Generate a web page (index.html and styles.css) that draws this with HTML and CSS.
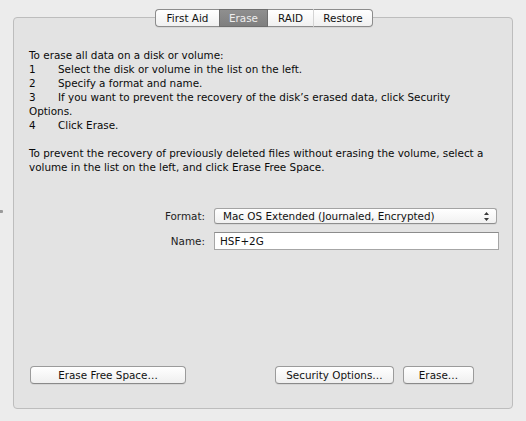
FILE: index.html
```html
<!DOCTYPE html>
<html>
<head>
<meta charset="utf-8">
<link rel="stylesheet" href="styles.css">
</head>
<body>
<div class="window">
  <span class="grip"></span>
  <div class="tabs">
    <span class="tab t1">First Aid</span>
    <span class="tab t2 selected">Erase</span>
    <span class="tab t3">RAID</span>
    <span class="tab t4">Restore</span>
  </div>
  <div class="panel">
    <div class="instructions">
      <p class="steps">To erase all data on a disk or volume:<br>1&#9;Select the disk or volume in the list on the left.<br>2&#9;Specify a format and name.<br>3&#9;If you want to prevent the recovery of the disk’s erased data, click Security Options.<br>4&#9;Click Erase.</p>
      <p>To prevent the recovery of previously deleted files without erasing the volume, select a volume in the list on the left, and click Erase Free Space.</p>
    </div>
    <div class="form">
      <span class="label">Format:</span>
      <div class="popup"><span>Mac OS Extended (Journaled, Encrypted)</span>
        <svg class="arrows" width="5" height="9" viewBox="0 0 5 9"><path d="M2.5 0 L5 3 L0 3 Z M0 6 L5 6 L2.5 9 Z" fill="#3a3a3a"/></svg>
      </div>
      <span class="label">Name:</span>
      <div class="field">HSF+2G</div>
    </div>
    <div class="actions">
      <span class="btn btn-free">Erase Free Space…</span>
      <span class="btn btn-sec">Security Options…</span>
      <span class="btn btn-erase">Erase…</span>
    </div>
  </div>
</div>
</body>
</html>
```
FILE: styles.css
```css
html, body {
  margin: 0;
  padding: 0;
}
body {
  background: #ececec;
  font-family: "Lucida Grande", "DejaVu Sans", sans-serif;
  font-size: 10.4px;
  color: #0a0a0a;
}
.window {
  position: relative;
  height: 421px;
  box-sizing: border-box;
  padding: 9px 13px 12px 13px;
  display: flex;
  flex-direction: column;
}
.grip {
  position: absolute;
  left: 0;
  top: 210px;
  width: 3px;
  height: 3px;
  background: #9a9a9a;
  border-radius: 0 1px 1px 0;
}
.tabs {
  display: flex;
  justify-content: center;
  position: relative;
  z-index: 1;
  height: 18px;
  margin-bottom: -10px;
  padding-left: 2px;
}
.tab {
  box-sizing: border-box;
  height: 18px;
  display: flex;
  align-items: center;
  justify-content: center;
  border-top: 1px solid #8c8c8c;
  border-bottom: 1px solid #8c8c8c;
  background: linear-gradient(#ffffff, #f0f0f0);
  color: #111;
  box-shadow: 0 1px 0 rgba(0,0,0,0.06);
}
.t1 {
  width: 64px;
  border-left: 1px solid #8c8c8c;
  border-radius: 4px 0 0 4px;
}
.t2 {
  width: 49px;
}
.t3 {
  width: 45px;
}
.t4 {
  width: 60px;
  border-right: 1px solid #8c8c8c;
  border-left: 1px solid #d4d4d4;
  border-radius: 0 4px 4px 0;
}
.tab.selected {
  background: linear-gradient(#8f8f8f, #7f7f7f);
  color: #eeeeee;
  border-color: #6e6e6e;
  border-left: 1px solid #6e6e6e;
  border-right: 1px solid #6e6e6e;
}
.panel {
  flex: 1;
  border: 1px solid #bdbdbd;
  border-radius: 4px;
  background: #e3e3e3;
  display: flex;
  flex-direction: column;
  padding: 30px 20px 24px 15px;
}
.instructions p {
  margin: 0 0 14px 0;
  line-height: 14px;
}
.instructions .steps {
  white-space: pre-wrap;
  tab-size: 29px;
}
.form {
  display: grid;
  grid-template-columns: 176px 285px;
  column-gap: 9px;
  row-gap: 8px;
  align-items: center;
  margin-top: 20px;
}
.label {
  text-align: right;
  color: #222;
}
.popup {
  box-sizing: border-box;
  width: 283px;
  height: 16px;
  border: 1px solid #a3a3a3;
  border-bottom-color: #8e8e8e;
  border-radius: 3px;
  background: linear-gradient(#ffffff, #f1f1f1);
  display: flex;
  align-items: center;
  justify-content: space-between;
  padding: 0 7px 0 8px;
  color: #111;
  box-shadow: 0 1px 0 rgba(0,0,0,0.05);
}
.arrows {
  display: block;
}
.field {
  box-sizing: border-box;
  height: 18px;
  border: 1px solid #a6a6a6;
  border-top-color: #8c8c8c;
  background: #ffffff;
  display: flex;
  align-items: center;
  padding-left: 5px;
  color: #111;
}
.actions {
  margin-top: auto;
  display: flex;
  align-items: center;
  padding-left: 1px;
  margin-right: 18px;
}
.btn {
  box-sizing: border-box;
  height: 18px;
  display: flex;
  align-items: center;
  justify-content: center;
  border: 1px solid #9b9b9b;
  border-bottom-color: #8a8a8a;
  border-radius: 4px;
  background: linear-gradient(#ffffff, #efefef);
  color: #111;
  box-shadow: 0 1px 0 rgba(0,0,0,0.06);
}
.btn-free {
  width: 156px;
}
.btn-sec {
  width: 119px;
  margin-left: auto;
}
.btn-erase {
  width: 71px;
  margin-left: 9px;
}
```
